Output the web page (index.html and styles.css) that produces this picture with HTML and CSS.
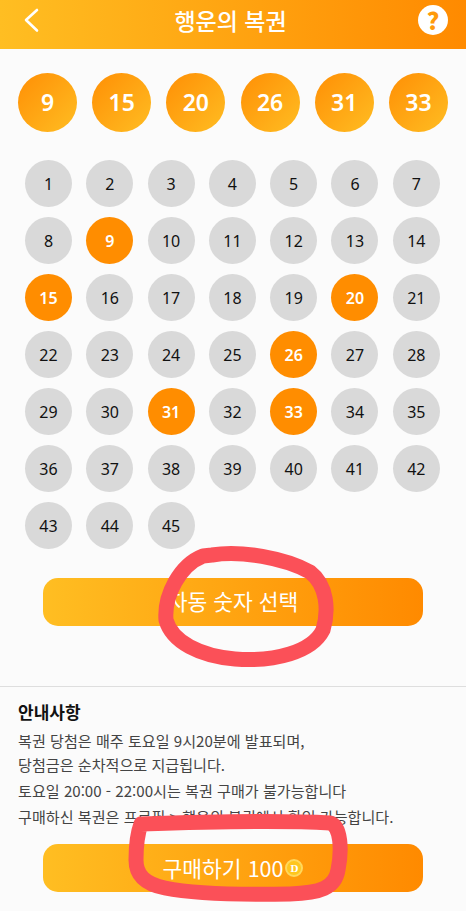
FILE: index.html
```html
<!DOCTYPE html>
<html lang="ko">
<head>
<meta charset="utf-8">
<title>행운의 복권</title>
<link rel="stylesheet" href="styles.css">
</head>
<body>
<div class="page">
  <header class="topbar">
    <svg class="back" viewBox="0 0 16 26" width="16" height="26"><path d="M14 3 L3 13 L14 23.5" fill="none" stroke="#fff" stroke-width="2.6" stroke-linecap="round" stroke-linejoin="round"/></svg>
    <h1 class="title">행운의 복권</h1>
    <span class="help">?</span>
  </header>
  <section class="picked">
    <span class="ball">9</span><span class="ball">15</span><span class="ball">20</span><span class="ball">26</span><span class="ball">31</span><span class="ball">33</span>
  </section>
  <section class="grid">
    <span class="num">1</span><span class="num">2</span><span class="num">3</span><span class="num">4</span><span class="num">5</span><span class="num">6</span><span class="num">7</span>
    <span class="num">8</span><span class="num on">9</span><span class="num">10</span><span class="num">11</span><span class="num">12</span><span class="num">13</span><span class="num">14</span>
    <span class="num on">15</span><span class="num">16</span><span class="num">17</span><span class="num">18</span><span class="num">19</span><span class="num on">20</span><span class="num">21</span>
    <span class="num">22</span><span class="num">23</span><span class="num">24</span><span class="num">25</span><span class="num on">26</span><span class="num">27</span><span class="num">28</span>
    <span class="num">29</span><span class="num">30</span><span class="num on">31</span><span class="num">32</span><span class="num on">33</span><span class="num">34</span><span class="num">35</span>
    <span class="num">36</span><span class="num">37</span><span class="num">38</span><span class="num">39</span><span class="num">40</span><span class="num">41</span><span class="num">42</span>
    <span class="num">43</span><span class="num">44</span><span class="num">45</span>
  </section>
  <button class="cta auto">자동 숫자 선택</button>
  <section class="info">
    <h2 class="info-title">안내사항</h2>
    <p class="line">복권 당첨은 매주 토요일 9시20분에 발표되며,<br>당첨금은 순차적으로 지급됩니다.</p>
    <p class="line">토요일 20:00 - 22:00시는 복권 구매가 불가능합니다</p>
    <p class="line">구매하신 복권은 프로필 &gt; 행운의 복권에서 확인 가능합니다.</p>
  </section>
  <button class="cta buy">구매하기 100<span class="coin">D</span></button>
  <svg class="scribble" viewBox="0 0 466 911" width="466" height="911">
    <path d="M212 555 C240 550 285 558 310 572 C327 585 329 610 323 630 C312 652 275 662 235 659 C200 656 172 642 166 620 C164 595 180 565 203 556 Z" fill="none" stroke="#fb5058" stroke-width="15" stroke-linejoin="round"/>
    <path d="M141 824 C200 822 280 820 330 823 C341 826 342 850 338 870 C335 888 320 893 290 894 C240 895 190 893 165 888 C145 884 136 875 136 860 C136 845 138 832 141 824 Z" fill="none" stroke="#fb5058" stroke-width="15" stroke-linejoin="round"/>
  </svg>
</div>
</body>
</html>
```
FILE: styles.css
```css
* { box-sizing: border-box; margin: 0; padding: 0; }
html, body { background: #fbfbfb; }
body { font-family: "Noto Sans CJK KR", "Noto Sans", sans-serif; }
.page { position: relative; width: 466px; height: 911px; overflow: hidden; background: #fbfbfb; }
.topbar { height: 49px; display: flex; align-items: center; justify-content: space-between; padding: 0 18px 9px 23px; background: linear-gradient(90deg, #ffbe22, #ff8a00); }
.back { display: block; }
.title { font-size: 23px; font-weight: 500; color: #fff; line-height: 30px; margin-left: 4px; }
.help { width: 30px; height: 30px; border-radius: 50%; background: #fff; color: #ff9a0c; font-size: 24px; font-weight: 900; display: flex; align-items: center; justify-content: center; line-height: 1; }
.picked { display: flex; justify-content: space-between; padding: 24px 18px 0; }
.ball { width: 59px; height: 59px; border-radius: 50%; background: linear-gradient(135deg, #ff8f05, #ffbd22); color: #fff; font-family: "Noto Sans", sans-serif; font-size: 23px; font-weight: 600; padding-bottom: 2px; display: flex; align-items: center; justify-content: center; }
.grid { display: grid; grid-template-columns: repeat(7, 47px); column-gap: 14.3px; row-gap: 10px; padding: 28px 25px 0; }
.num { width: 47px; height: 47px; border-radius: 50%; background: #d9d9d9; color: #111; font-family: "Noto Sans", sans-serif; font-size: 16px; display: flex; align-items: center; justify-content: center; }
.num.on { background: #ff8d00; color: #fff; font-weight: 600; }
.cta { display: flex; align-items: center; justify-content: center; width: 380px; height: 48px; margin-left: 43px; border: 0; border-radius: 15px; background: linear-gradient(90deg, #ffbe22, #ff8a00); color: #fff; font-family: inherit; font-size: 21.5px; }
.auto { margin-top: 29px; padding-bottom: 4px; }
.buy { padding-bottom: 1px; }
.info { margin-top: 60px; padding: 12px 18px 0; border-top: 1px solid #dedede; height: 158px; }
.info-title { font-size: 17px; font-weight: 700; color: #111; line-height: 25px; margin-bottom: 4px; }
.line { font-size: 15.1px; color: #444; line-height: 24px; margin-bottom: 2px; white-space: nowrap; }
.coin { width: 18px; height: 18px; margin-left: 2px; border-radius: 50%; background: #ffc61e; border: 2px solid #ffd85c; color: #fff; font-family: "Liberation Serif", serif; font-size: 11px; font-weight: 700; display: flex; align-items: center; justify-content: center; }
.scribble { position: absolute; left: 0; top: 0; pointer-events: none; }
```
